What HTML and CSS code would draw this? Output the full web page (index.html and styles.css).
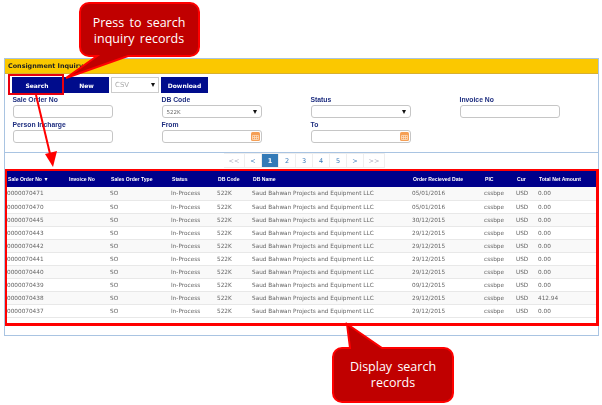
FILE: index.html
```html
<!DOCTYPE html>
<html lang="en">
<head>
  <meta charset="UTF-8">
  <title>Consignment Inquiry</title>
  <link rel="stylesheet" href="styles.css">
</head>
<body>
  <div class="panel">
    <div class="panel-title">Consignment Inquiry</div>

    <div class="toolbar">
      <button class="btn btn-search">Search</button>
      <button class="btn btn-new">New</button>
      <div class="select select-csv"><span>CSV</span><i class="caret"></i></div>
      <button class="btn btn-download">Download</button>
    </div>

    <div class="filters">
      <div class="field">
        <label>Sale Order No</label>
        <div class="input"></div>
      </div>
      <div class="field">
        <label>DB Code</label>
        <div class="input"><span>522K</span><i class="caret"></i></div>
      </div>
      <div class="field">
        <label>Status</label>
        <div class="input"><span></span><i class="caret"></i></div>
      </div>
      <div class="field">
        <label>Invoice No</label>
        <div class="input"></div>
      </div>
      <div class="field">
        <label>Person Incharge</label>
        <div class="input"></div>
      </div>
      <div class="field">
        <label>From</label>
        <div class="input"><span></span>
          <svg class="cal" width="9" height="9" viewBox="0 0 9 9"><rect width="9" height="9" rx="1.5" fill="#f59f55"/><path d="M1.5 3.5h6v4h-6zM3.5 3.5v4M5.5 3.5v4M1.5 5.5h6" fill="none" stroke="#fde3c8" stroke-width=".7"/></svg>
        </div>
      </div>
      <div class="field">
        <label>To</label>
        <div class="input"><span></span>
          <svg class="cal" width="9" height="9" viewBox="0 0 9 9"><rect width="9" height="9" rx="1.5" fill="#f59f55"/><path d="M1.5 3.5h6v4h-6zM3.5 3.5v4M5.5 3.5v4M1.5 5.5h6" fill="none" stroke="#fde3c8" stroke-width=".7"/></svg>
        </div>
      </div>
    </div>

    <div class="results">
      <div class="pager">
        <a class="wide">&lt;&lt;</a><a>&lt;</a><a class="active">1</a><a>2</a><a>3</a><a>4</a><a>5</a><a>&gt;</a><a class="wide">&gt;&gt;</a>
      </div>

      <div class="table-box">
        <table>
          <thead>
            <tr>
              <th class="c1">Sale Order No ▼</th>
              <th class="c2">Invoice No</th>
              <th class="c3">Sales Order Type</th>
              <th class="c4">Status</th>
              <th class="c5">DB Code</th>
              <th class="c6">DB Name</th>
              <th class="c7">Order Recieved Date</th>
              <th class="c8">PIC</th>
              <th class="c9">Cur</th>
              <th>Total Net Amount</th>
            </tr>
          </thead>
          <tbody>
            <tr><td>0000070471</td><td></td><td>SO</td><td>In-Process</td><td>522K</td><td>Saud Bahwan Projects and Equipment LLC</td><td>05/01/2016</td><td>cssbpe</td><td>USD</td><td>0.00</td></tr>
            <tr><td>0000070470</td><td></td><td>SO</td><td>In-Process</td><td>522K</td><td>Saud Bahwan Projects and Equipment LLC</td><td>05/01/2016</td><td>cssbpe</td><td>USD</td><td>0.00</td></tr>
            <tr><td>0000070445</td><td></td><td>SO</td><td>In-Process</td><td>522K</td><td>Saud Bahwan Projects and Equipment LLC</td><td>30/12/2015</td><td>cssbpe</td><td>USD</td><td>0.00</td></tr>
            <tr><td>0000070443</td><td></td><td>SO</td><td>In-Process</td><td>522K</td><td>Saud Bahwan Projects and Equipment LLC</td><td>29/12/2015</td><td>cssbpe</td><td>USD</td><td>0.00</td></tr>
            <tr><td>0000070442</td><td></td><td>SO</td><td>In-Process</td><td>522K</td><td>Saud Bahwan Projects and Equipment LLC</td><td>29/12/2015</td><td>cssbpe</td><td>USD</td><td>0.00</td></tr>
            <tr><td>0000070441</td><td></td><td>SO</td><td>In-Process</td><td>522K</td><td>Saud Bahwan Projects and Equipment LLC</td><td>29/12/2015</td><td>cssbpe</td><td>USD</td><td>0.00</td></tr>
            <tr><td>0000070440</td><td></td><td>SO</td><td>In-Process</td><td>522K</td><td>Saud Bahwan Projects and Equipment LLC</td><td>29/12/2015</td><td>cssbpe</td><td>USD</td><td>0.00</td></tr>
            <tr><td>0000070439</td><td></td><td>SO</td><td>In-Process</td><td>522K</td><td>Saud Bahwan Projects and Equipment LLC</td><td>09/12/2015</td><td>cssbpe</td><td>USD</td><td>0.00</td></tr>
            <tr><td>0000070438</td><td></td><td>SO</td><td>In-Process</td><td>522K</td><td>Saud Bahwan Projects and Equipment LLC</td><td>29/12/2015</td><td>cssbpe</td><td>USD</td><td>412.94</td></tr>
            <tr><td>0000070437</td><td></td><td>SO</td><td>In-Process</td><td>522K</td><td>Saud Bahwan Projects and Equipment LLC</td><td>29/12/2015</td><td>cssbpe</td><td>USD</td><td>0.00</td></tr>
          </tbody>
        </table>
      </div>
    </div>
  </div>

  <!-- annotations drawn on top of the screenshot -->
  <div class="search-mark"></div>
  <svg class="notes" width="602" height="405" viewBox="0 0 602 405">
    <path class="bubble" d="M89 3H190a9 9 0 0 1 9 9V47a9 9 0 0 1-9 9H128L66 78 97 56H89a9 9 0 0 1-9-9V12a9 9 0 0 1 9-9Z"/>
    <path class="bubble" d="M342 348H350L347 324 382 348H444a9 9 0 0 1 9 9V393a9 9 0 0 1-9 9H342a9 9 0 0 1-9-9V357a9 9 0 0 1 9-9Z"/>
    <path class="arrow" d="M36 95 51 158"/>
    <path class="arrow-head" d="M53 167 45 154 57 151Z"/>
  </svg>
  <div class="callout callout-top">Press to search<br>inquiry records</div>
  <div class="callout callout-bottom">Display search<br>records</div>
</body>
</html>
```

FILE: styles.css
```css
* {
  box-sizing: border-box;
}

body {
  margin: 0;
  padding: 58px 0 0 4px;
  width: 602px;
  height: 405px;
  overflow: hidden;
  position: relative;
  background: #fff;
  font-family: 'DejaVu Sans', sans-serif;
}

.panel {
  width: 595px;
  height: 278px;
  border: 1px solid #a9c4e2;
  filter: blur(0.4px);
}

.panel-title {
  height: 15px;
  padding-left: 3px;
  background: #fbc800;
  border-bottom: 1px solid #d8b030;
  color: #222;
  font-size: 6.4px;
  font-weight: bold;
  line-height: 14px;
}

.toolbar {
  display: flex;
  gap: 2px;
  padding: 3px 0 0 7px;
}

.btn {
  height: 16px;
  padding: 0;
  border: 0;
  background: #000c8c;
  color: #fff;
  font-family: inherit;
  font-size: 6px;
  font-weight: bold;
}

.btn-search {
  width: 50px;
}

.btn-new {
  width: 45px;
}

.btn-download {
  width: 47px;
}

.select {
  width: 48px;
  height: 16px;
  padding: 0 3px;
  display: flex;
  align-items: center;
  justify-content: space-between;
  border: 1px solid #ccc;
  color: #aaa;
  font-size: 7px;
}

.caret {
  width: 0;
  height: 0;
  border-left: 2.5px solid transparent;
  border-right: 2.5px solid transparent;
  border-top: 4px solid #111;
}

.filters {
  display: grid;
  grid-template-columns: repeat(4, 100px);
  column-gap: 49px;
  padding: 2px 0 0 7.5px;
}

.field {
  height: 25px;
}

.field label {
  display: block;
  height: 10px;
  color: #1f2f80;
  font-family: 'Liberation Sans', sans-serif;
  font-size: 6.8px;
  font-weight: bold;
  line-height: 10px;
}

.input {
  height: 13px;
  padding: 0 4px;
  display: flex;
  align-items: center;
  justify-content: space-between;
  border: 1.5px solid #c6c6c6;
  border-radius: 3px;
  background: #fff;
  color: #666;
  font-size: 5.5px;
}

.cal {
  margin-right: -3px;
}

.results {
  margin-top: 7px;
  border-top: 1px solid #a9c4e2;
}

.pager {
  height: 16px;
  padding-left: 219px;
  display: flex;
}

.pager a {
  width: 17px;
  height: 15px;
  border: 1px solid #eee;
  border-left: 0;
  color: #3a7ab8;
  font-size: 6.5px;
  line-height: 14px;
  text-align: center;
}

.pager a.wide {
  width: 21px;
  color: #aab;
}

.pager a.active {
  background: #337ab7;
  color: #fff;
  font-weight: bold;
}

.table-box {
  width: 594px;
  height: 157px;
  border: 2px solid #f00;
  border-width: 2px 3px 3px 2px;
}

table {
  width: 100%;
  table-layout: fixed;
  border-collapse: collapse;
  font-size: 5.75px;
}

th {
  height: 16px;
  padding: 0 0 0 2px;
  background: #00008b;
  color: #fff;
  font-family: 'Liberation Sans', sans-serif;
  font-size: 5.1px;
  font-weight: bold;
  text-align: left;
  white-space: nowrap;
}

th.c1 {
  padding-left: 1px;
}

td {
  height: 13.1px;
  padding: 0 0 0 1px;
  border-bottom: 1px solid #e8e8e8;
  color: #666;
  white-space: nowrap;
}

td:first-child {
  padding-left: 0;
}

tbody tr:nth-child(odd) {
  background: #f9f9f9;
}

.c1 {
  width: 60px;
}

.c2 {
  width: 42px;
}

.c3 {
  width: 61px;
}

.c4 {
  width: 46px;
}

.c5 {
  width: 35px;
}

.c6 {
  width: 160px;
}

.c7 {
  width: 72px;
}

.c8 {
  width: 32px;
}

.c9 {
  width: 22px;
}

.search-mark {
  position: absolute;
  left: 8px;
  top: 74px;
  width: 56px;
  height: 21px;
  border: 2px solid #e8000f;
}

.notes {
  position: absolute;
  left: 0;
  top: 0;
}

.bubble {
  fill: #c00000;
  stroke: #f00;
  stroke-width: 2;
}

.arrow {
  fill: none;
  stroke: #f00;
  stroke-width: 2;
}

.arrow-head {
  fill: #f00;
}

.callout {
  position: absolute;
  width: 122px;
  color: #fff;
  font-family: 'Open Sans', sans-serif;
  font-size: 12.5px;
  word-spacing: 2px;
  line-height: 16px;
  text-align: center;
}

.callout-top {
  left: 78px;
  top: 15px;
}

.callout-bottom {
  left: 332px;
  top: 359px;
}
```
